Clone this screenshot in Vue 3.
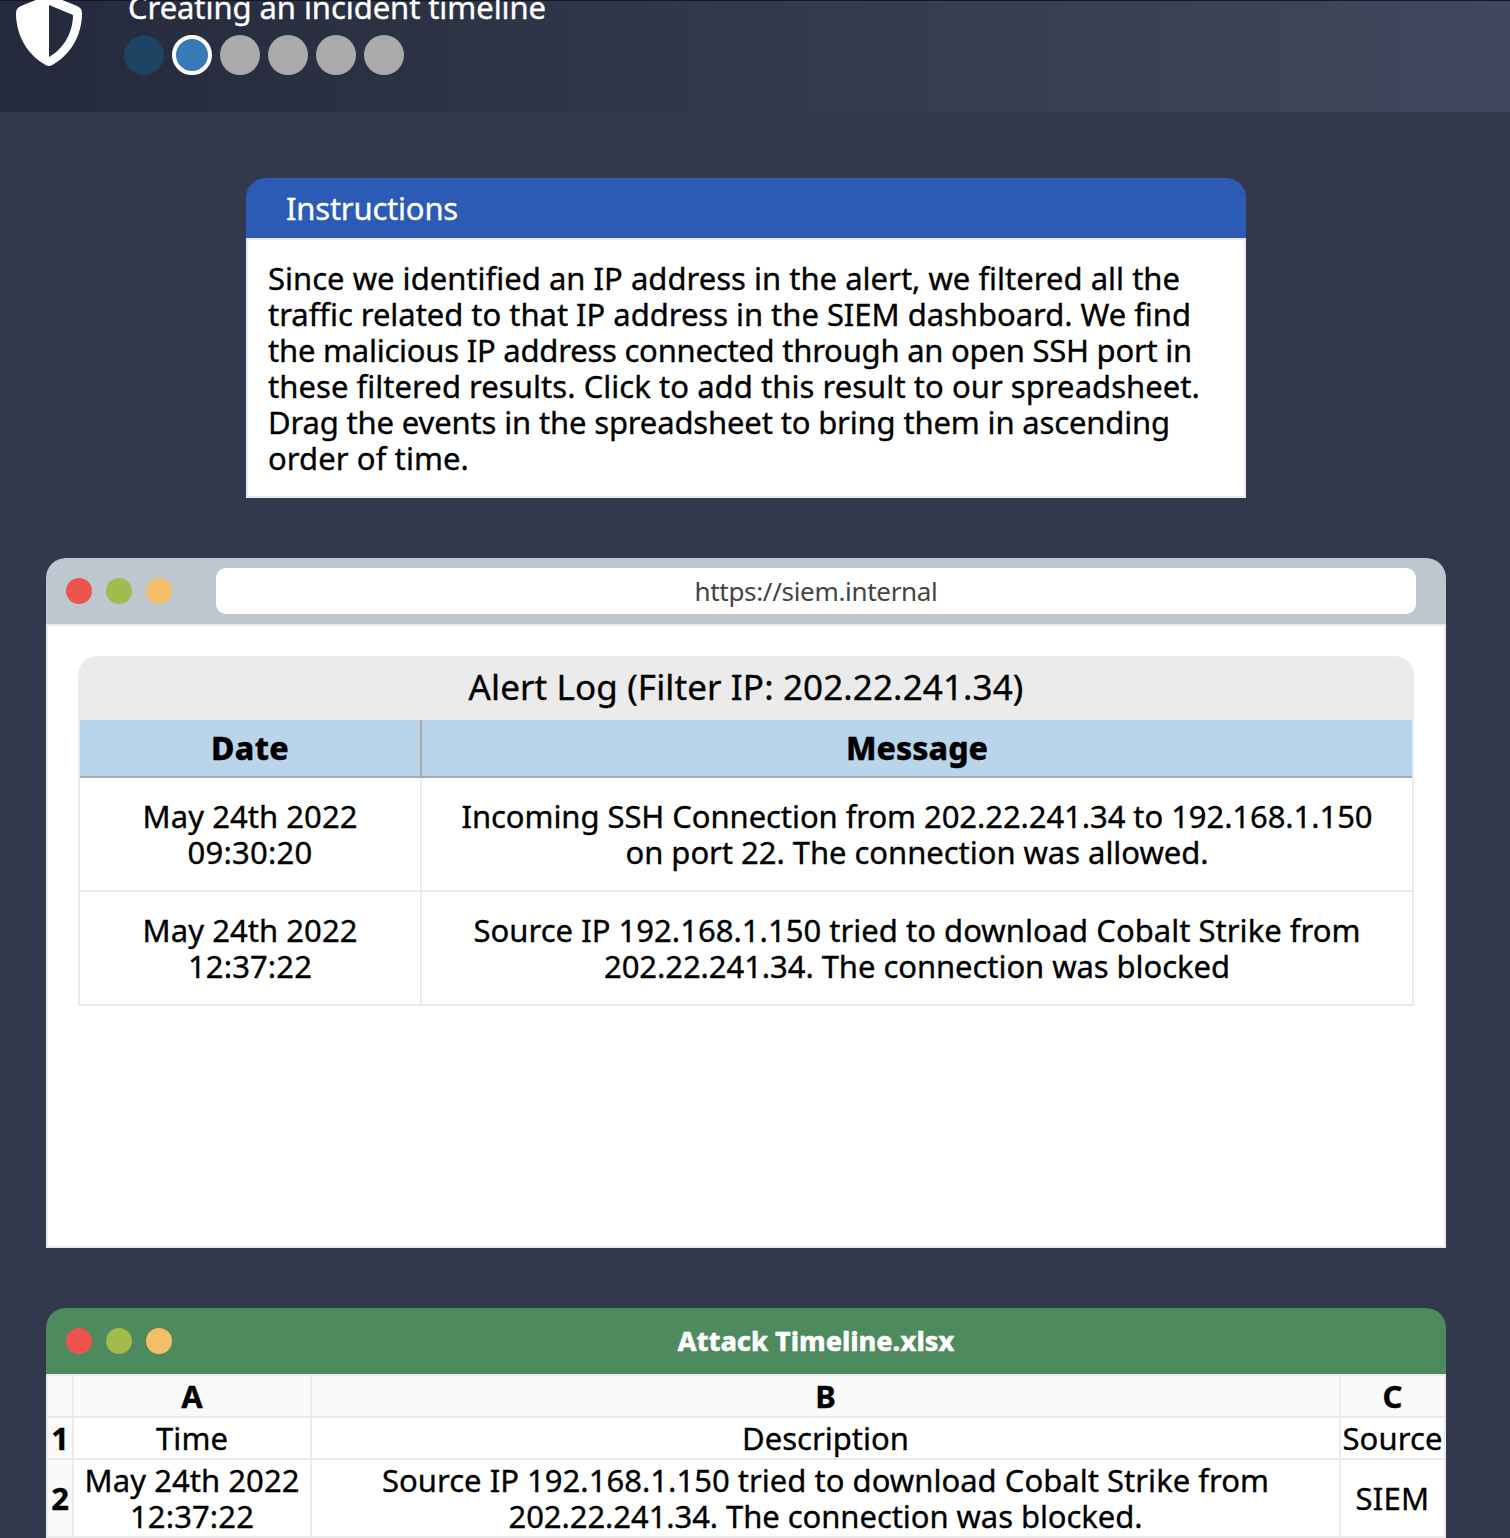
<script setup>
// Spreads a line of text over its measured width by adjusting the tracking.
const vFit = {
  mounted(el, { value }) {
    if (!value) return
    const range = document.createRange()
    range.selectNodeContents(el)
    const natural = range.getBoundingClientRect().width
    const spacing = (value - natural) / el.textContent.trim().length
    el.style.letterSpacing = `${spacing.toFixed(3)}px`
  },
}

const steps = ['done', 'active', '', '', '', '']

const instructions = [
  ['Since we identified an IP address in the alert, we filtered all the', 912],
  ['traffic related to that IP address in the SIEM dashboard. We find', 923],
  ['the malicious IP address connected through an open SSH port in', 924],
  ['these filtered results. Click to add this result to our spreadsheet.', 932],
  ['Drag the events in the spreadsheet to bring them in ascending', 902],
  ['order of time.', 201],
]

const logs = [
  {
    date: [['May 24th 2022', 215], ['09:30:20', 125]],
    message: [
      ['Incoming SSH Connection from 202.22.241.34 to 192.168.1.150', 911],
      ['on port 22. The connection was allowed.', 583],
    ],
  },
  {
    date: [['May 24th 2022', 215], ['12:37:22', 124]],
    message: [
      ['Source IP 192.168.1.150 tried to download Cobalt Strike from', 887],
      ['202.22.241.34. The connection was blocked', 626],
    ],
  },
]

const sheet = [
  { n: '1', a: [['Time', 72]], b: [['Description', 167]], c: [['Source', 100]] },
  {
    n: '2',
    a: [['May 24th 2022', 215], ['12:37:22', 124]],
    b: [
      ['Source IP 192.168.1.150 tried to download Cobalt Strike from', 887],
      ['202.22.241.34. The connection was blocked.', 634],
    ],
    c: [['SIEM', 74]],
  },
]
</script>

<template>
  <div class="page">
    <header class="top">
      <svg class="shield" viewBox="0 0 66 73" width="66" height="73">
        <path fill="#fff" fill-rule="evenodd" d="M29 2.2Q33 .8 37 2.2L61 12Q66 14.2 66 19C66 43 53 62 36 71.2Q33 72.6 30 71.2C13 62 0 43 0 19Q0 14.2 5 12ZM33 11V63C48 54.5 57 38 57 21Z" />
      </svg>
      <div class="progress">
        <h1 class="title"><span v-fit="418" class="line">Creating an incident timeline</span></h1>
        <div class="steps">
          <span v-for="(s, i) in steps" :key="i" class="step" :class="s"></span>
        </div>
      </div>
    </header>

    <main class="content">
      <section class="instructions">
        <h2 class="instructions-head"><span v-fit="172" class="line">Instructions</span></h2>
        <div class="instructions-body">
          <span v-for="l in instructions" :key="l[0]" v-fit="l[1]" class="line">{{ l[0] }}</span>
        </div>
      </section>

      <section class="window browser">
        <div class="bar">
          <i class="dot red"></i><i class="dot green"></i><i class="dot amber"></i>
          <div class="url"><span v-fit="243" class="line">https://siem.internal</span></div>
        </div>
        <div class="browser-body">
          <div class="log">
            <div class="log-title"><span v-fit="555" class="line">Alert Log (Filter IP: 202.22.241.34)</span></div>
            <div class="log-row log-head">
              <div><span v-fit="78" class="line">Date</span></div>
              <div><span v-fit="142" class="line">Message</span></div>
            </div>
            <div v-for="(r, i) in logs" :key="i" class="log-row">
              <div><span v-for="l in r.date" :key="l[0]" v-fit="l[1]" class="line">{{ l[0] }}</span></div>
              <div><span v-for="l in r.message" :key="l[0]" v-fit="l[1]" class="line">{{ l[0] }}</span></div>
            </div>
          </div>
        </div>
      </section>

      <section class="window">
        <div class="bar excel">
          <i class="dot red"></i><i class="dot green"></i><i class="dot amber"></i>
          <div class="filename"><span v-fit="277" class="line">Attack Timeline.xlsx</span></div>
        </div>
        <div class="sheet">
          <div class="corner"></div>
          <div class="col">A</div>
          <div class="col">B</div>
          <div class="col">C</div>
          <template v-for="r in sheet" :key="r.n">
            <div class="num">{{ r.n }}</div>
            <div v-for="k in ['a', 'b', 'c']" :key="k">
              <span v-for="l in r[k]" :key="l[0]" v-fit="l[1]" class="line">{{ l[0] }}</span>
            </div>
          </template>
        </div>
      </section>
    </main>
  </div>
</template>

<style>
body {
  background: #33394d;
  overflow: hidden;
}
</style>

<style scoped>
.page,
.page * {
  box-sizing: border-box;
}
.page {
  width: 1510px;
  height: 1538px;
  overflow: hidden;
  background: #33394d;
  font: 400 31px/36px 'Noto Sans', sans-serif;
  color: #000;
  -webkit-text-stroke: 0.35px currentColor;
}
.line {
  display: block;
  width: max-content;
  white-space: nowrap;
}
.top {
  display: flex;
  height: 112px;
  padding-left: 16px;
  border-top: 1px solid #11162e;
  background: linear-gradient(90deg, #242a3b, #41485d);
}
.shield {
  flex: none;
  margin-top: -7px;
}
.progress {
  margin: -12px 0 0 42px;
}
.title {
  margin: 0 0 10px 4px;
  font: inherit;
  color: #fff;
}
.steps {
  display: flex;
  gap: 8px;
}
.step {
  width: 40px;
  height: 40px;
  border-radius: 50%;
  background: #aaa;
}
.step.done {
  background: #1d4463;
}
.step.active {
  border: 4px solid #fff;
  background: #387ab8;
}
.content {
  display: flex;
  flex-direction: column;
  gap: 60px;
  width: 1400px;
  margin: 0 0 0 46px;
  padding-top: 66px;
}
.instructions {
  width: 1000px;
  margin: 0 auto;
}
.instructions-head {
  height: 60px;
  margin: 0;
  padding: 12px 40px;
  border-radius: 20px 20px 0 0;
  background: #2c5bb5;
  font: inherit;
  color: #fff;
}
.instructions-body {
  padding: 20px;
  border: 2px solid #ebebeb;
  background: #fff;
}
.bar {
  display: flex;
  align-items: center;
  gap: 14px;
  height: 66px;
  padding: 0 30px 0 20px;
  border-radius: 20px 20px 0 0;
  background: #bdc7d0;
}
.bar.excel {
  background: #4d8a5e;
}
.dot {
  width: 26px;
  height: 26px;
  border-radius: 50%;
}
.red {
  background: #ed544d;
}
.green {
  background: #a1bb4c;
}
.amber {
  background: #f6be68;
}
.url,
.filename {
  display: flex;
  align-items: center;
  justify-content: center;
  width: 1200px;
  height: 46px;
  margin-left: 30px;
  border-radius: 10px;
}
.url {
  background: #fff;
  font-size: 26px;
  color: #444;
  -webkit-text-stroke-width: 0;
}
.filename {
  font-size: 27px;
  font-weight: 800;
  color: #fff;
}
.browser-body {
  height: 624px;
  padding: 30px;
  border: 2px solid #ebebeb;
  background: #fff;
}
.log {
  border: 2px solid #ebebeb;
  border-top: 0;
  border-radius: 20px 20px 0 0;
}
.log-title {
  display: flex;
  align-items: center;
  justify-content: center;
  height: 64px;
  margin: 0 -2px;
  padding-bottom: 2px;
  border-radius: 20px 20px 0 0;
  background: #ebebeb;
  font-size: 35px;
}
.log-row {
  display: grid;
  grid-template-columns: 342px 1fr;
  border-bottom: 2px solid #ebebeb;
}
.log-row:last-child {
  border-bottom: 0;
}
.log-row > div {
  display: flex;
  flex-direction: column;
  align-items: center;
  padding: 20px 0;
}
.log-row > div:first-child {
  border-right: 2px solid #ebebeb;
}
.log-head {
  border-bottom-color: #aaa;
  background: #b9d5eb;
  font-size: 32px;
  font-weight: 800;
}
.log-head > div {
  padding: 10px 0;
}
.log-head > div:first-child {
  border-right-color: #aaa;
}
.sheet {
  display: grid;
  grid-template-columns: 24px 236px 1027px 103px;
  grid-template-rows: 40px 40px 76px;
  gap: 2px;
  padding: 2px;
  background: #ebebeb;
}
.sheet > div {
  display: flex;
  flex-direction: column;
  align-items: center;
  justify-content: center;
  background: #fff;
}
.sheet > .corner,
.sheet > .col,
.sheet > .num {
  background: #fafafa;
  font-weight: 700;
}
</style>
